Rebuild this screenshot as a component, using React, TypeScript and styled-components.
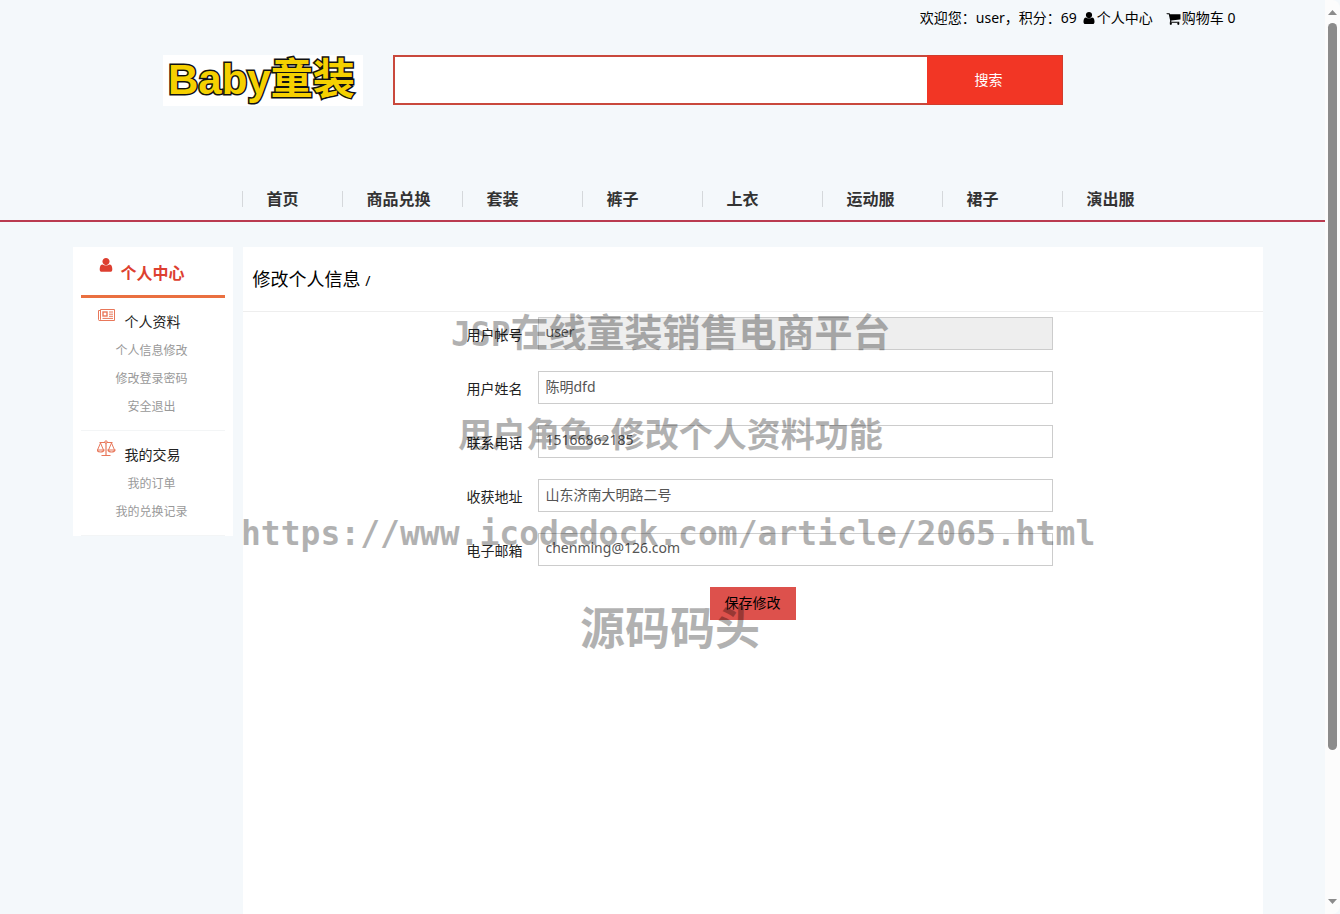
import React from 'react';
import styled, { createGlobalStyle } from 'styled-components';

const GlobalStyle = createGlobalStyle`
  *, *::before, *::after { box-sizing: border-box; }
  body {
    margin: 0;
    background: #f4f8fb;
    color: #000;
    font: 14px/20px "Noto Sans", "Noto Sans CJK SC", sans-serif;
  }
  a { color: inherit; text-decoration: none; }
  ul { list-style: none; margin: 0; padding: 0; }
  input, button { font: inherit; border-radius: 0; }
`;

const Window = styled.div`
  display: grid;
  grid-template-columns: minmax(0, 1fr) 15px;
  height: 100vh;
  overflow: hidden;
`;

const Page = styled.div`
  position: relative;
  display: flex;
  flex-direction: column;
  min-height: 0;
  overflow: hidden;
`;

const TopBar = styled.div`
  width: 100%;
  max-width: 1200px;
  margin: 0 auto;
  padding: 8px 27px 0 0;
  display: flex;
  justify-content: flex-end;
  gap: 5px;
`;

const TopLink = styled.a<{ $spaced?: boolean }>`
  display: inline-flex;
  align-items: center;
  gap: 1px;
  margin-left: ${(p) => (p.$spaced ? 8 : 0)}px;
`;

const Header = styled.header`
  width: 100%;
  max-width: 1000px;
  margin: 27px auto 0;
  display: flex;
  align-items: flex-start;
  gap: 30px;
`;

const Logo = styled.a`
  flex: none;
  width: 200px;
  height: 51px;
  background: #fff;
`;

const SearchForm = styled.form`
  flex: 0 1 670px;
  display: flex;
  height: 50px;
  border: 2px solid #c9483c;
`;

const SearchInput = styled.input`
  flex: 1;
  min-width: 0;
  border: 0;
  padding: 0 10px;
  outline: none;
  background: #fff;
`;

const SearchButton = styled.button`
  width: 136px;
  margin: -2px -2px -2px 0;
  border: solid #d23c2c;
  border-width: 1px 1px 1px 0;
  padding: 0 11px 0 0;
  background: #f23625;
  color: #fff;
`;

const Nav = styled.nav`
  margin-top: 85px;
  border-bottom: 2px solid #ba3b50;
`;

const NavList = styled.ul`
  display: flex;
  width: 100%;
  max-width: 1000px;
  height: 29px;
  && {
    margin: 0 auto;
    padding-left: 79px;
  }
`;

const NavItem = styled.li<{ $first?: boolean }>`
  flex: none;
  width: ${(p) => (p.$first ? 100 : 120)}px;
  height: 16px;
  padding-left: 24px;
  border-left: 1px solid #d5d8db;
  font-size: 16px;
  line-height: 16px;
  font-weight: 700;
  color: #333;
`;

const Main = styled.main`
  flex: 1;
  width: 100%;
  max-width: 1200px;
  margin: 25px auto 0;
  padding-left: 10px;
  display: flex;
  gap: 10px;
`;

const Sidebar = styled.aside`
  flex: none;
  align-self: flex-start;
  width: 160px;
  padding: 0 8px;
  background: #fff;
`;

const SideTitle = styled.h2`
  display: flex;
  align-items: center;
  gap: 7px;
  height: 51px;
  margin: 0;
  padding: 4px 0 0 17px;
  border-bottom: 3px solid #ea7040;
  font-size: 16px;
  line-height: 24px;
  color: #dd3f30;
  svg { margin-bottom: 16px; }
`;

const SideGroup = styled.section`
  padding: 10px 0 9px;
  border-bottom: 1px solid #f3f5f6;
`;

const GroupTitle = styled.h3`
  display: flex;
  align-items: center;
  gap: 8px;
  height: 29px;
  margin: 0;
  padding: 0 0 1px 16px;
  font-size: 14px;
  font-weight: 400;
  color: #222;
  svg { margin-bottom: 14px; }
`;

const SideLink = styled.a`
  display: block;
  padding-right: 2px;
  text-align: center;
  font-size: 12px;
  line-height: 28px;
  color: #999;
`;

const Panel = styled.section`
  flex: 1;
  min-width: 0;
  background: #fff;
`;

const PanelTitle = styled.h1`
  height: 65px;
  margin: 0;
  padding-left: 10px;
  border-bottom: 1px solid #eee;
  font-size: 18px;
  line-height: 64px;
  font-weight: 400;
  small { font-size: 14px; }
`;

const Form = styled.form`
  display: flex;
  flex-direction: column;
  gap: 21px;
  padding: 5px 210px 0;
`;

const Field = styled.div`
  display: grid;
  grid-template-columns: 70px minmax(0, 1fr);
  gap: 15px;
`;

const Label = styled.label`
  padding-top: 8px;
  text-align: right;
  color: #222;
`;

const TextInput = styled.input`
  height: 33px;
  min-width: 0;
  padding: 0 7px 4px;
  border: 1px solid #ccc;
  background: #fff;
  color: #555;
  &:read-only { background: #eee; }
`;

const SaveButton = styled.button`
  align-self: center;
  width: 86px;
  height: 33px;
  padding: 0 0 2px;
  border: 0;
  background: #dd514c;
  color: #000;
`;

const Watermark = styled.div<{ $x: number; $y: number; $size: number }>`
  position: absolute;
  left: ${(p) => p.$x}px;
  top: ${(p) => p.$y}px;
  font-family: "Noto Sans CJK SC", sans-serif;
  font-size: ${(p) => p.$size}px;
  line-height: 50px;
  font-weight: 700;
  white-space: nowrap;
  color: #000;
  opacity: 0.3;
  pointer-events: none;
`;

const Mono = styled.span<{ $size: number }>`
  font-family: "DejaVu Sans Mono", monospace;
  font-size: ${(p) => p.$size}px;
`;

const Scrollbar = styled.div`
  display: flex;
  flex-direction: column;
  align-items: center;
  padding: 10px 0;
  background: #fcfcfc;
  border-radius: 0 8px 8px 0;
`;

const Arrow = styled.span<{ $down?: boolean }>`
  width: 9px;
  height: 5px;
  margin-top: ${(p) => (p.$down ? 'auto' : 0)};
  background: #8b8b8b;
  clip-path: ${(p) => (p.$down ? 'polygon(0 0, 100% 0, 50% 100%)' : 'polygon(50% 0, 100% 100%, 0 100%)')};
`;

const Thumb = styled.span`
  width: 9px;
  flex: 0 0 727px;
  max-height: 82%;
  margin-top: 8px;
  border-radius: 5px;
  background: #8b8b8b;
`;

const UserIcon = ({ size }: { size: number }) => (
  <svg width={size} height={size} viewBox="0 0 1792 1792" fill="currentColor" aria-hidden="true">
    <path d="M1600 1399q0 109-62.5 187t-150.5 78h-982q-88 0-150.5-78t-62.5-187q0-85 8.500-160.500t31.500-152 58.500-131 94-89 134.500-34.500q155 128 377 128t377-128q76 0 134.500 34.500t94 89 58.500 131 31.500 152 8.500 160.500zm-304-887q0 166-117 283t-283 117-283-117-117-283 117-283 283-117 283 117 117 283z" />
  </svg>
);

const CartIcon = () => (
  <svg width="15" height="15" viewBox="0 0 1792 1792" fill="currentColor" aria-hidden="true">
    <path d="M704 1536q0 52-38 90t-90 38-90-38-38-90 38-90 90-38 90 38 38 90zm896 0q0 52-38 90t-90 38-90-38-38-90 38-90 90-38 90 38 38 90zm128-1088v512q0 24-16.5 42.5t-40.5 21.5l-1044 122q13 60 13 70 0 16-24 64h920q26 0 45 19t19 45-19 45-45 19h-1024q-26 0-45-19t-19-45q0-11 8-31.5t16-36 21.5-40 15.5-29.5l-177-823h-204q-26 0-45-19t-19-45 19-45 45-19h256q16 0 28.5 6.5t19.5 15.5 13 24.5 8 26 5.5 29.5 4.5 26h1201q26 0 45 19t19 45z" />
  </svg>
);

const NewsIcon = () => (
  <svg width="20" height="14" viewBox="0 0 20 14" fill="none" stroke="#e8775a" aria-hidden="true">
    <path d="M3.5 1.500h14v11h-15q-1 0-1-1v-9h2M3.500 1.500v10q0 1-1 1" />
    <rect x="6" y="4" width="4" height="4" strokeWidth="1.4" />
    <path d="M12 4h4M12 6.200h4M12 8.300h4M5.500 10.400h10.500" />
  </svg>
);

const ScaleIcon = () => (
  <svg width="20" height="18" viewBox="1 0 20 18" fill="none" stroke="#e8775a" aria-hidden="true">
    <path d="M3.500 3.500h5.500M11 3.500h5.500M10 4v12M5.500 16.500h9" strokeWidth="1.200" />
    <circle cx="10" cy="3" r="1.200" />
    <path d="M4.500 4L1.500 11M4.500 4L7.500 11M15.500 4l-3 7M15.500 4l3 7" />
    <path d="M1 11h7q-.5 2-3.500 2T1 11zM12 11h7q-.5 2-3.500 2T12 11z" strokeWidth="1.200" />
  </svg>
);

const navItems = ['首页', '商品兑换', '套装', '裤子', '上衣', '运动服', '裙子', '演出服'];

const fields = [
  { id: 'account', label: '用户帐号', value: 'user', readOnly: true },
  { id: 'name', label: '用户姓名', value: '陈明dfd' },
  { id: 'phone', label: '联系电话', value: '15166862185' },
  { id: 'address', label: '收获地址', value: '山东济南大明路二号' },
  { id: 'email', label: '电子邮箱', value: 'chenming@126.com' },
];

export default function App() {
  return (
    <Window>
      <GlobalStyle />
      <Page>
        <TopBar>
          <span>欢迎您：user，积分：69</span>
          <TopLink href="#center"><UserIcon size={14} />个人中心</TopLink>
          <TopLink href="#cart" $spaced><CartIcon />购物车 0</TopLink>
        </TopBar>

        <Header>
          <Logo href="#home" aria-label="Baby童装">
            <svg width="200" height="51" viewBox="0 0 200 51">
              <text
                x="5" y="39" fontSize="42" fontWeight="700"
                fontFamily='"Liberation Sans", "Noto Sans CJK SC", sans-serif'
                fill="#f5d000" stroke="#111" strokeWidth="3" paintOrder="stroke"
              >Baby童装</text>
            </svg>
          </Logo>
          <SearchForm>
            <SearchInput type="text" aria-label="搜索" />
            <SearchButton type="button">搜索</SearchButton>
          </SearchForm>
        </Header>

        <Nav>
          <NavList>
            {navItems.map((item, i) => (
              <NavItem key={item} $first={i === 0}><a href="#nav">{item}</a></NavItem>
            ))}
          </NavList>
        </Nav>

        <Main>
          <Sidebar>
            <SideTitle><UserIcon size={16} />个人中心</SideTitle>
            <SideGroup>
              <GroupTitle><NewsIcon />个人资料</GroupTitle>
              <SideLink href="#info">个人信息修改</SideLink>
              <SideLink href="#password">修改登录密码</SideLink>
              <SideLink href="#logout">安全退出</SideLink>
            </SideGroup>
            <SideGroup>
              <GroupTitle><ScaleIcon />我的交易</GroupTitle>
              <SideLink href="#orders">我的订单</SideLink>
              <SideLink href="#exchange">我的兑换记录</SideLink>
            </SideGroup>
          </Sidebar>

          <Panel>
            <PanelTitle>修改个人信息 <small>/</small></PanelTitle>
            <Form>
              {fields.map((f) => (
                <Field key={f.id}>
                  <Label htmlFor={f.id}>{f.label}</Label>
                  <TextInput id={f.id} type="text" defaultValue={f.value} readOnly={f.readOnly} />
                </Field>
              ))}
              <SaveButton type="button">保存修改</SaveButton>
            </Form>
          </Panel>
        </Main>

        <Watermark $x={451} $y={305} $size={38}><Mono $size={33}>JSP</Mono>在线童装销售电商平台</Watermark>
        <Watermark $x={458} $y={408} $size={34}>用户角色<Mono $size={28}>-</Mono>修改个人资料功能</Watermark>
        <Watermark $x={241} $y={506} $size={33}><Mono $size={33}>https://www.icodedock.com/article/2065.html</Mono></Watermark>
        <Watermark $x={580} $y={601} $size={45}>源码码头</Watermark>
      </Page>
      <Scrollbar aria-hidden="true">
        <Arrow />
        <Thumb />
        <Arrow $down />
      </Scrollbar>
    </Window>
  );
}
